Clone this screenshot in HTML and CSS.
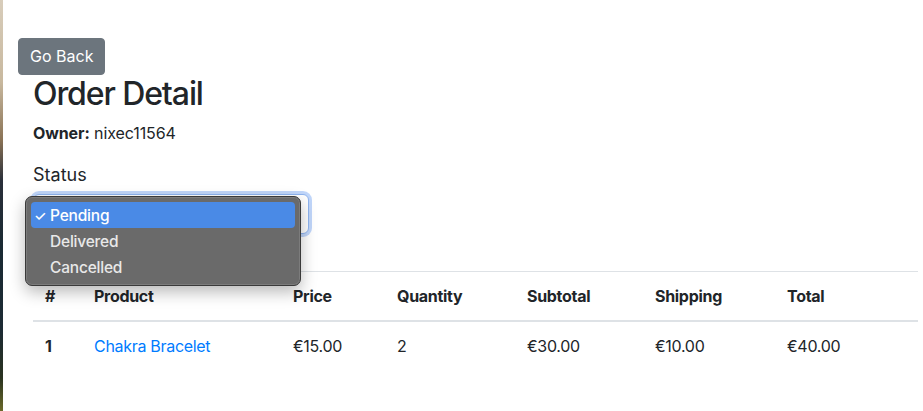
FILE: index.html
```html
<!DOCTYPE html>
<html lang="en">
<head>
<meta charset="utf-8">
<title>Order Detail</title>
<link rel="stylesheet" href="styles.css">
</head>
<body>
<div class="screen">
  <div class="edge"></div>
  <div class="page">
    <button class="btn-back" type="button">Go Back</button>
    <div class="content">
      <h1 class="title">Order Detail</h1>
      <p class="owner"><strong>Owner:</strong> nixec11564</p>
      <div class="form-group">
        <label class="label">Status</label>
        <div class="select-wrap">
          <div class="select"></div>
          <div class="menu">
            <div class="menu-item active"><span class="check">✓</span>Pending</div>
            <div class="menu-item"><span class="check"></span>Delivered</div>
            <div class="menu-item"><span class="check"></span>Cancelled</div>
          </div>
        </div>
      </div>
      <table class="table">
        <thead>
          <tr>
            <th class="c-num">#</th>
            <th class="c-prod">Product</th>
            <th class="c-price">Price</th>
            <th class="c-qty">Quantity</th>
            <th class="c-sub">Subtotal</th>
            <th class="c-ship">Shipping</th>
            <th class="c-total">Total</th>
          </tr>
        </thead>
        <tbody>
          <tr>
            <th>1</th>
            <td><a class="link" href="#">Chakra Bracelet</a></td>
            <td>€15.00</td>
            <td>2</td>
            <td>€30.00</td>
            <td>€10.00</td>
            <td>€40.00</td>
          </tr>
        </tbody>
      </table>
    </div>
  </div>
</div>
</body>
</html>
```
FILE: styles.css
```css
* { box-sizing: border-box; }
html, body { margin: 0; padding: 0; background: #fff; }
body {
  font-family: Inter, "Noto Sans", "Liberation Sans", sans-serif;
  font-size: 16px;
  line-height: 1.5;
  color: #212529;
}
.screen {
  display: flex;
  min-height: 411px;
}
.edge {
  width: 3px;
  flex: none;
  background: linear-gradient(to bottom, #d8cdbb 0%, #c8b89e 20%, #8a7356 34%, #2a2f3a 44%, #1a2a33 60%, #1c2a34 80%, #2a3320 92%, #6b6a2a 100%);
}
.page {
  flex: 1;
  padding: 38px 5px 0 15px;
}
.btn-back {
  display: block;
  font: inherit;
  color: #fff;
  background: #6c757d;
  border: 1px solid #6c757d;
  border-radius: 4px;
  padding: 6px 11px;
  line-height: 23px;
  cursor: pointer;
}
.content {
  padding-left: 15px;
}
.title {
  margin: 0 0 8px;
  font-size: 32px;
  font-weight: 500;
  line-height: 1.2;
  letter-spacing: -1.1px;
}
.owner {
  margin: 0 0 16px;
  letter-spacing: -0.1px;
}
.owner strong { font-weight: 700; }
.form-group {
  margin-bottom: 37px;
}
.label {
  display: block;
  font-size: 18px;
  margin-bottom: 6px;
}
.select-wrap {
  position: relative;
  width: 276px;
}
.select {
  height: 40px;
  border: 1px solid #8fb4ef;
  border-radius: 6px;
  background: #fff;
  box-shadow: 0 0 0 3px rgba(140, 180, 245, 0.55);
}
.menu {
  position: absolute;
  left: -8px;
  top: 2px;
  width: 276px;
  padding: 5px 5px;
  background: #6a6a6a;
  border: 1px solid #3a3a3a;
  border-radius: 7px;
  box-shadow: 0 6px 16px rgba(0, 0, 0, 0.28), inset 0 0 0 1px rgba(255,255,255,0.12);
}
.menu-item {
  display: flex;
  align-items: center;
  height: 26px;
  padding-left: 3px;
  border-radius: 4px;
  color: #e8e8e8;
  font-size: 15.5px;
  font-weight: 500;
  letter-spacing: -0.2px;
}
.menu-item.active {
  background: #4a8ae6;
  color: #fff;
}
.check {
  width: 16px;
  font-size: 14px;
  flex: none;
}
.table {
  width: 885px;
  border-collapse: collapse;
  letter-spacing: -0.3px;
}
.table th, .table td {
  text-align: left;
  padding: 12px;
  vertical-align: top;
  border-top: 1px solid #dee2e6;
}
.table thead th {
  border-bottom: 2px solid #dee2e6;
  font-weight: 700;
}
.table tbody th { font-weight: 700; }
.c-num { width: 49px; }
.c-prod { width: 199px; }
.c-price { width: 104px; }
.c-qty { width: 130px; }
.c-sub { width: 128px; }
.c-ship { width: 132px; }
.link { color: #007bff; text-decoration: none; }
```
